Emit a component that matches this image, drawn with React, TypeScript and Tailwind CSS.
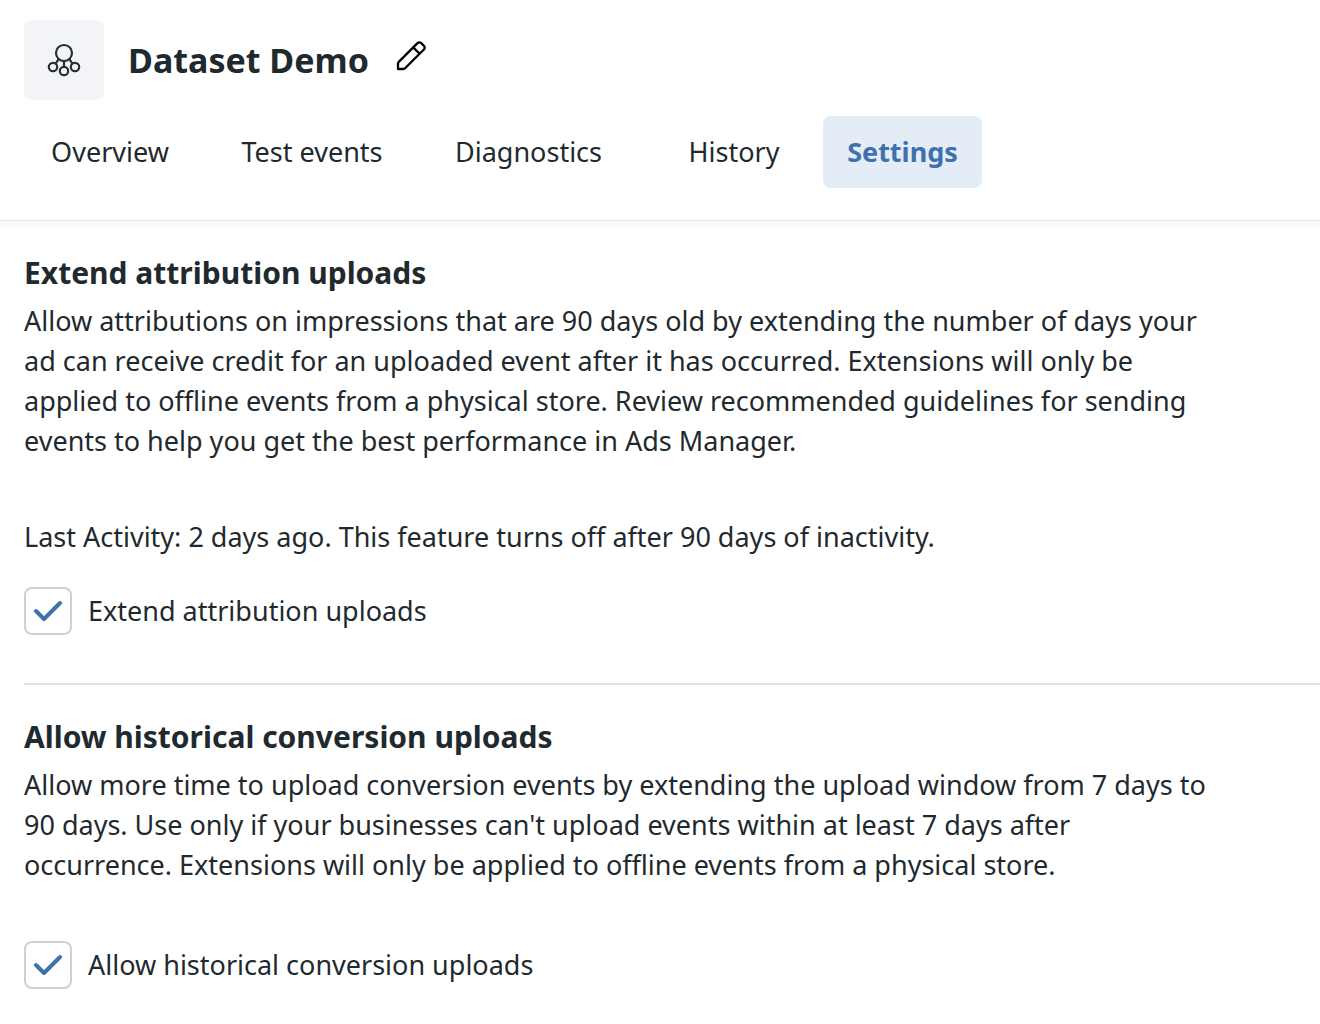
import React, { useState } from 'react';

const tabs = [
  { name: 'Overview', width: 'w-[172px]' },
  { name: 'Test events', width: 'w-[232px]' },
  { name: 'Diagnostics', width: 'w-[201px]' },
  { name: 'History', width: 'w-[178px] ml-4' },
  { name: 'Settings', width: 'w-[159px]' },
];

function DatasetIcon() {
  return (
    <svg width="34" height="34" viewBox="0 0 34 34" fill="none" stroke="#263238" strokeWidth="2.2">
      <circle cx="17" cy="10" r="8" />
      <circle cx="6" cy="24" r="4.2" />
      <circle cx="17" cy="28" r="4.2" />
      <circle cx="28" cy="24" r="4.2" />
      <path d="M17 18v6M11.6 16.2 8.6 20.6M22.4 16.2l3 4.4" />
    </svg>
  );
}

function PencilIcon() {
  return (
    <svg width="32" height="32" viewBox="0 0 32 32" fill="none" stroke="#000" strokeWidth="2.3" strokeLinejoin="round">
      <path d="M3 29v-5.2a2.6 2.6 0 0 1 .8-1.9L22.5 3.1a2.6 2.6 0 0 1 3.7 0l2.7 2.7a2.6 2.6 0 0 1 0 3.7L10.1 28.2a2.6 2.6 0 0 1-1.9.8Z" />
      <path d="m18.2 7.4 6.4 6.4" />
    </svg>
  );
}

function Checkbox({ id, label }: { id: string; label: string }) {
  const [checked, setChecked] = useState(true);

  return (
    <div className="flex items-center gap-4">
      <div className="relative h-12 w-12">
        <input
          id={id}
          type="checkbox"
          checked={checked}
          onChange={(e) => setChecked(e.target.checked)}
          className="block h-12 w-12 appearance-none rounded-lg border-2 border-[#cfd2d4] bg-white"
        />
        {checked && (
          <svg className="pointer-events-none absolute inset-0" width="48" height="48" viewBox="0 0 48 48" fill="none" stroke="#3e71ae" strokeWidth="4" strokeLinecap="round" strokeLinejoin="round">
            <path d="m12 24 8 8L36 16" />
          </svg>
        )}
      </div>
      <label htmlFor={id}>{label}</label>
    </div>
  );
}

export default function App() {
  const [active, setActive] = useState('Settings');

  return (
    <div className="min-h-screen bg-white font-['Noto_Sans',sans-serif] text-[27px] leading-10 text-[#1f2a2f]">
      <header className="border-b border-[#e4e6e8] px-6 pt-5 pb-8 shadow-[0_7px_0_#fafafa]">
        <div className="flex items-center">
          <div className="flex h-20 w-20 items-center justify-center rounded-lg bg-[#f2f4f8]">
            <DatasetIcon />
          </div>
          <h1 className="ml-6 text-[34px] font-bold">Dataset Demo</h1>
          <button aria-label="Edit name" className="mb-2 ml-[26px]">
            <PencilIcon />
          </button>
        </div>
        <nav className="mt-4 flex">
          {tabs.map((tab) => (
            <button
              key={tab.name}
              onClick={() => setActive(tab.name)}
              className={`h-[72px] shrink-0 rounded-lg ${tab.width} ${
                active === tab.name ? 'bg-[#e4ecf5] font-bold text-[#3e71ae]' : ''
              }`}
            >
              {tab.name}
            </button>
          ))}
        </nav>
      </header>

      <main className="pl-6">
        <section className="border-b-2 border-[#dfe2e3] pt-8 pb-12">
          <h2 className="text-[30px] font-bold">Extend attribution uploads</h2>
          <p className="mt-2 max-w-[1192px]">
            Allow attributions on impressions that are 90 days old by extending the number of days your ad can
            receive credit for an uploaded event after it has occurred. Extensions will only be applied to offline
            events from a physical store. Review recommended guidelines for sending events to help you get the best
            performance in Ads Manager.
          </p>
          <p className="mt-14 mb-[30px]">
            Last Activity: 2 days ago. This feature turns off after 90 days of inactivity.
          </p>
          <Checkbox id="extend" label="Extend attribution uploads" />
        </section>

        <section className="pt-8">
          <h2 className="text-[30px] font-bold">Allow historical conversion uploads</h2>
          <p className="mt-2 mb-14 max-w-[1192px]">
            Allow more time to upload conversion events by extending the upload window from 7 days to 90 days. Use
            only if your businesses can't upload events within at least 7 days after occurrence. Extensions will
            only be applied to offline events from a physical store.
          </p>
          <Checkbox id="historical" label="Allow historical conversion uploads" />
        </section>
      </main>
    </div>
  );
}
